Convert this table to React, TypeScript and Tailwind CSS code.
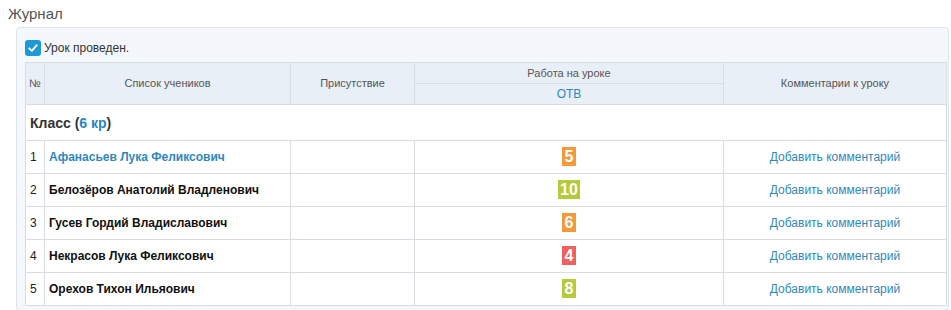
import React from "react";

type Student = {
  name: string;
  grade: string;
  color: string;
  active?: boolean;
};

const students: Student[] = [
  { name: "Афанасьев Лука Феликсович", grade: "5", color: "bg-[#f39a3d]", active: true },
  { name: "Белозёров Анатолий Владленович", grade: "10", color: "bg-[#b6cb3b]" },
  { name: "Гусев Гордий Владиславович", grade: "6", color: "bg-[#f39a3d]" },
  { name: "Некрасов Лука Феликсович", grade: "4", color: "bg-[#f0605d]" },
  { name: "Орехов Тихон Ильяович", grade: "8", color: "bg-[#b6cb3b]" },
];

export default function App() {
  return (
    <div className="w-[951px] h-[310px] overflow-hidden bg-white font-[Arial,Liberation_Sans,sans-serif] text-[#222]">
      <div className="pl-2 pt-[4px] text-[15px] leading-[19px] text-[#555]">Журнал</div>

      <div className="ml-4 mr-[2px] mt-[4px] rounded-[4px] border border-[#dde3ea] bg-[#f4f7fc] pl-[8px] pr-[2px] pt-[11px] pb-[4px]">
        {/* checkbox */}
        <label className="flex items-center gap-[3px] h-[17px] mb-[6px]">
          <span className="flex h-[16px] w-[16px] items-center justify-center rounded-[3px] bg-[#1d9ad6]">
            <svg width="12" height="12" viewBox="0 0 12 12" fill="none">
              <path d="M2.2 6.3 L4.8 8.8 L9.8 3.2" stroke="white" strokeWidth="1.8" strokeLinecap="round" strokeLinejoin="round" />
            </svg>
          </span>
          <span className="text-[12px] text-[#333]">Урок проведен.</span>
        </label>

        <table className="w-[921px] table-fixed border-collapse bg-white text-[12px]">
          <colgroup>
            <col className="w-[19px]" />
            <col className="w-[246px]" />
            <col className="w-[124px]" />
            <col className="w-[309px]" />
            <col className="w-[223px]" />
          </colgroup>
          <thead>
            <tr className="h-[21px] bg-[#e9eff7] text-[11px] text-[#555]">
              <th rowSpan={2} className="border border-[#d8dde4] px-[3px] text-left font-normal">№</th>
              <th rowSpan={2} className="border border-[#d8dde4] font-normal">Список учеников</th>
              <th rowSpan={2} className="border border-[#d8dde4] font-normal">Присутствие</th>
              <th className="border border-[#d8dde4] font-normal">Работа на уроке</th>
              <th rowSpan={2} className="border border-[#d8dde4] font-normal">Комментарии к уроку</th>
            </tr>
            <tr className="h-[21px] bg-[#e9eff7]">
              <th className="border border-[#d8dde4] text-[12px] font-normal text-[#2a87c0]">ОТВ</th>
            </tr>
          </thead>
          <tbody>
            <tr className="h-[36px]">
              <td colSpan={5} className="border border-[#d8dde4] px-[4px] pt-[2px] text-[14px] font-bold text-[#333]">
                Класс (<span className="text-[#2a87c0]">6 кр</span>)
              </td>
            </tr>
            {students.map((s, i) => (
              <tr key={i} className="h-[33px]">
                <td className="border border-[#d8dde4] px-[4px] text-[12px] text-[#222]">{i + 1}</td>
                <td
                  className={`border border-[#d8dde4] px-[4px] font-bold ${
                    s.active ? "text-[#2f88bd]" : "text-[#111]"
                  }`}
                >
                  {s.name}
                </td>
                <td className="border border-[#d8dde4]"></td>
                <td className="border border-[#d8dde4] text-center">
                  <span
                    className={`inline-flex h-[19px] items-center justify-center px-[2px] min-w-[14px] text-[16px] font-bold leading-none text-white ${s.color}`}
                  >
                    {s.grade}
                  </span>
                </td>
                <td className="border border-[#d8dde4] text-center text-[12px] text-[#2f88bd]">
                  Добавить комментарий
                </td>
              </tr>
            ))}
          </tbody>
        </table>
      </div>
    </div>
  );
}
